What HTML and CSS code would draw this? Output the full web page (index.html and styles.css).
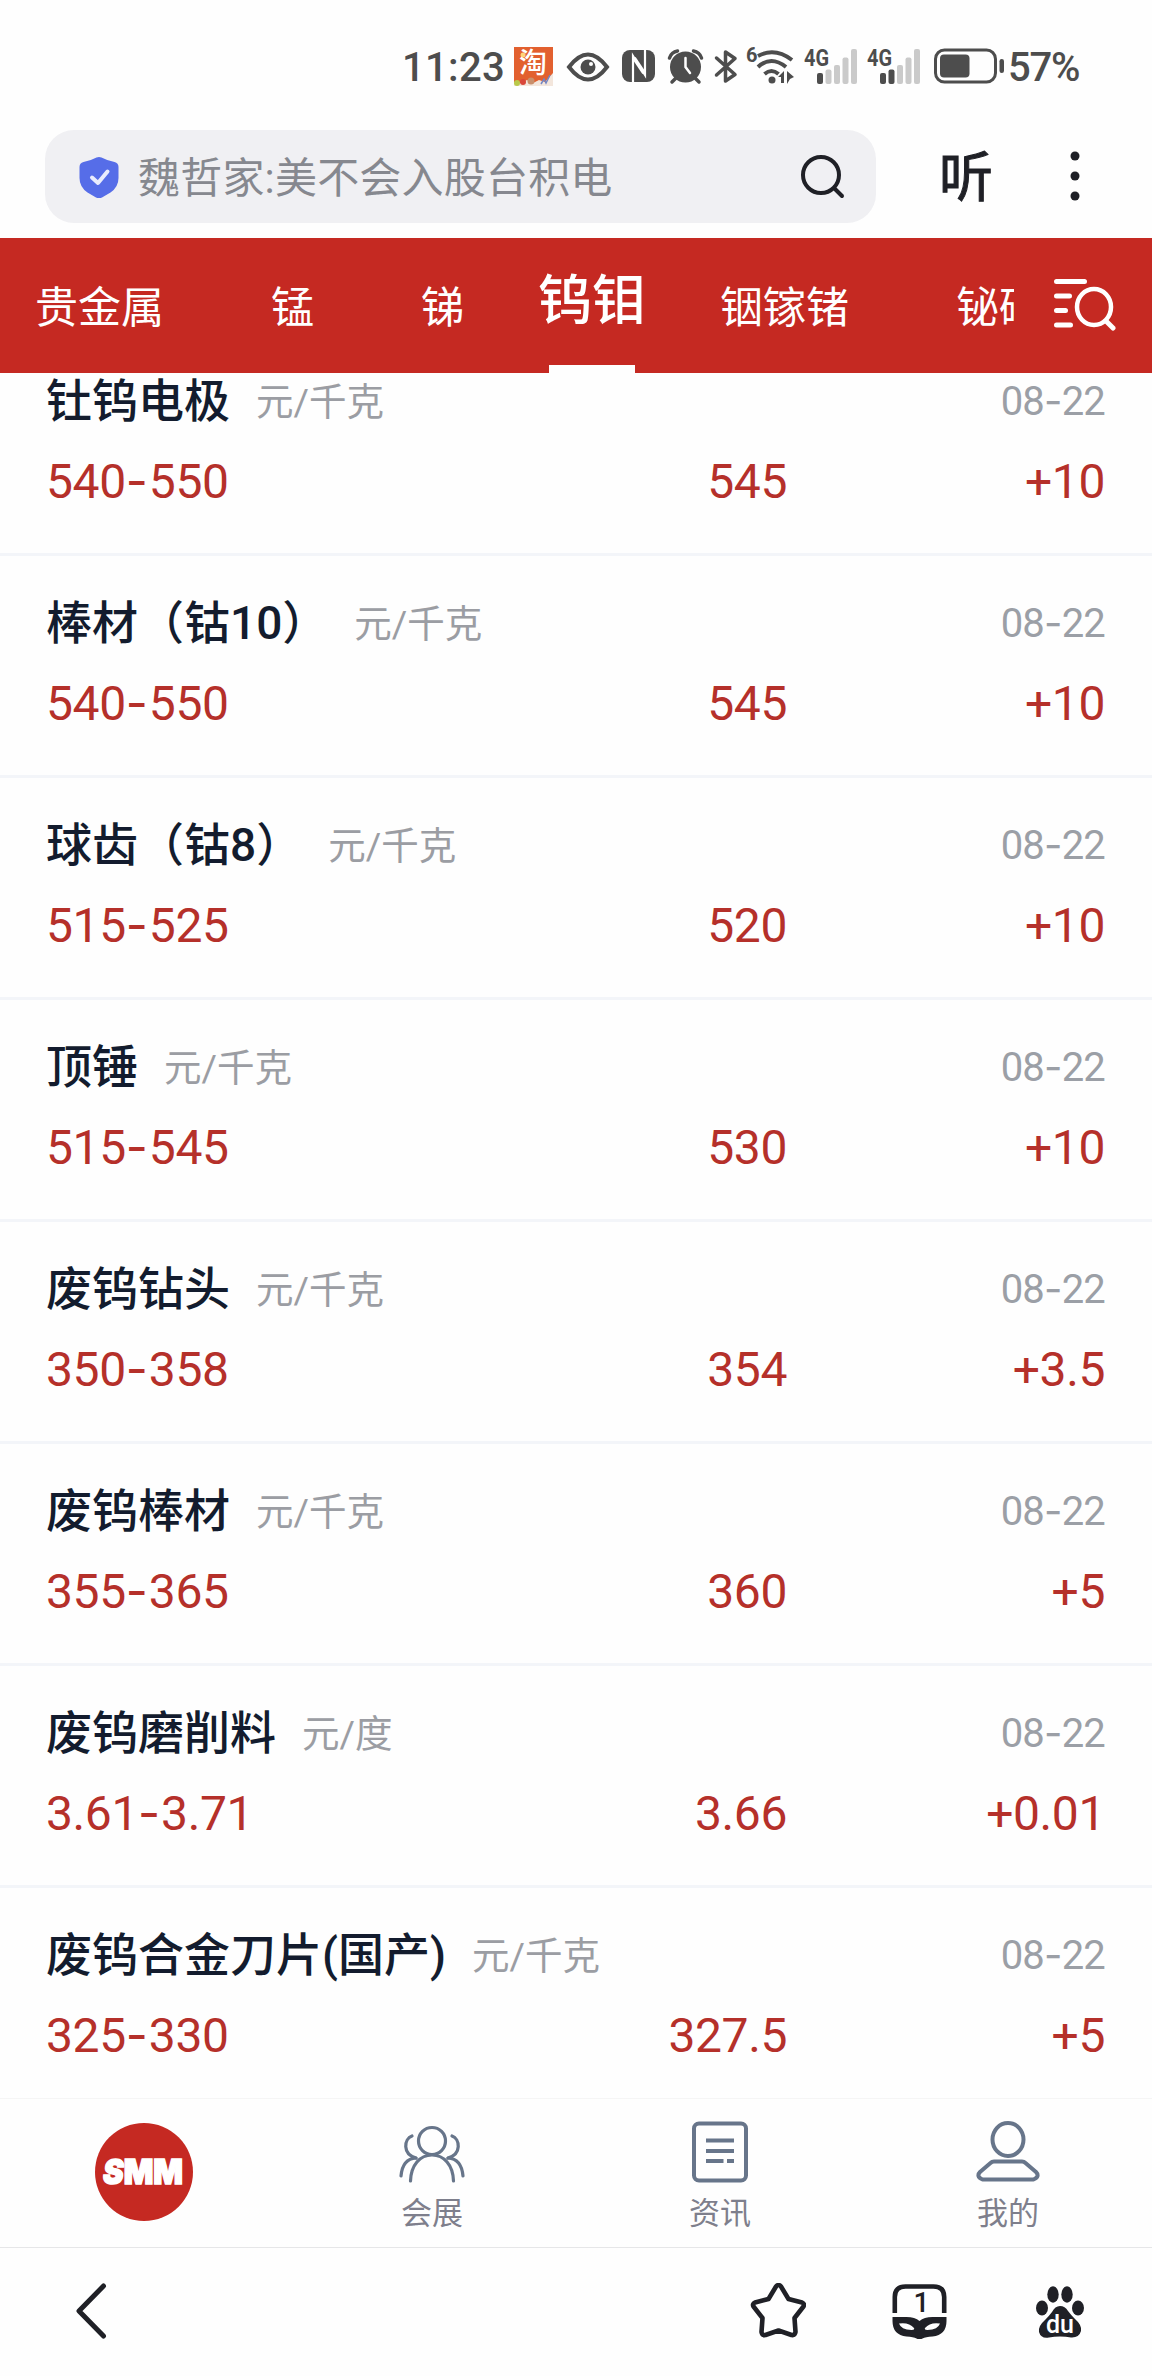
FILE: index.html
```html
<!DOCTYPE html>
<html lang="zh-CN">
<head>
  <meta charset="UTF-8">
  <meta name="viewport" content="width=device-width, initial-scale=1.0">
  <title>钨钼 - SMM</title>
  <link rel="stylesheet" href="styles.css">
</head>
<body>
  <!-- Status bar -->
  <div class="status">
    <span class="time">11:23</span>
    <svg class="status-icons" width="506" height="44" viewBox="510 44 506 44">
      <!-- taobao -->
      <rect x="514" y="47" width="39" height="39" fill="#e2602f"/>
      <circle cx="523" cy="55" r="2.5" fill="#ffd37a"/>
      <path d="M514 82l7 1 6-3 6 3 6-3 6 2 8-9v13h-39z" fill="#f3e6dc"/>
      <circle cx="517" cy="83" r="3" fill="#b9c94a"/>
      <circle cx="523" cy="82" r="3" fill="#d9473a"/>
      <circle cx="531" cy="81" r="3.5" fill="#c98f6b"/>
      <path d="M541 84l3-5 2 4 4-8" stroke="#7486c4" stroke-width="1.5" fill="none"/>
      <text x="519" y="73" class="tao">淘</text>
      <!-- eye -->
      <path d="M569 67q19-25 38 0q-19 25-38 0z" fill="none" stroke="#4d4d4d" stroke-width="4"/>
      <circle cx="588" cy="67" r="7.5" fill="#4d4d4d"/>
      <circle cx="591" cy="64" r="2" fill="#fff"/>
      <!-- nfc -->
      <rect x="622" y="50" width="33" height="32" rx="8" fill="#4d4d4d"/>
      <path d="M633 82V56L645 75V50" fill="none" stroke="#fff" stroke-width="2.200"/>
      <path d="M634 58L644 73" stroke="#fff" stroke-width="4"/>
      <!-- alarm -->
      <circle cx="685.500" cy="67" r="15.500" fill="#4d4d4d"/>
      <path d="M669.500 58q2-6 8-7M701.500 58q-2-6-8-7M676 78l-4 4M695 78l4 4" fill="none" stroke="#4d4d4d" stroke-width="3.500" stroke-linecap="round"/>
      <path d="M685.500 58v9l4.500 6" fill="none" stroke="#fff" stroke-width="2.500" stroke-linecap="round"/>
      <!-- bluetooth -->
      <path d="M716.500 58L735 74.500L725.500 81V52L735 58.500L716.500 75" fill="none" stroke="#4d4d4d" stroke-width="3.500" stroke-linejoin="round" stroke-linecap="round"/>
      <!-- wifi -->
      <text x="746" y="62" class="small-label">6</text>
      <g fill="none" stroke="#4d4d4d" stroke-width="4">
        <path d="M758 56q17-9 34 4"/>
        <path d="M758 67q13-12 28 0"/>
        <path d="M764.500 74q7-6 14 0"/>
      </g>
      <circle cx="772" cy="80" r="3.500" fill="#4d4d4d"/>
      <path d="M778 77l6-6v12h-3v-6zM787 71l7 6-4 2-3 5z" fill="#4d4d4d"/>
      <!-- signal 1 -->
      <text x="804" y="66" class="net-label" textLength="25" lengthAdjust="spacingAndGlyphs">4G</text>
      <g fill="#cacaca">
        <rect x="817" y="73" width="6" height="11" rx="2" fill="#4d4d4d"/>
        <rect x="825.500" y="69.500" width="6" height="14.500" rx="2"/>
        <rect x="834" y="65" width="6" height="19" rx="2"/>
        <rect x="842.500" y="57.500" width="6" height="26.500" rx="2"/>
        <rect x="851" y="49" width="6" height="35" rx="2"/>
      </g>
      <!-- signal 2 -->
      <text x="867" y="66" class="net-label" textLength="25" lengthAdjust="spacingAndGlyphs">4G</text>
      <g fill="#cacaca">
        <rect x="880" y="73" width="6" height="11" rx="2" fill="#4d4d4d"/>
        <rect x="888.500" y="69.500" width="6" height="14.500" rx="2" fill="#4d4d4d"/>
        <rect x="897" y="65" width="6" height="19" rx="2"/>
        <rect x="905.500" y="57.500" width="6" height="26.500" rx="2"/>
        <rect x="914" y="49" width="6" height="35" rx="2"/>
      </g>
      <!-- battery -->
      <rect x="935.500" y="50" width="60" height="32" rx="9" fill="none" stroke="#4d4d4d" stroke-width="3"/>
      <rect x="940" y="54.500" width="29.500" height="23" rx="4" fill="#4d4d4d"/>
      <rect x="999.500" y="59" width="4.500" height="14" rx="2.200" fill="#4d4d4d"/>
    </svg>
    <span class="battery">57%</span>
  </div>

  <!-- Browser search bar -->
  <div class="topbar">
    <div class="search">
      <svg width="40" height="42" viewBox="0 0 40 42">
        <path d="M17.500 1.500q2.500-1.200 5 0Q28 4.500 35.500 6q4 1 4 5v11q0 9-8 14.500l-8.500 5q-3 1.500-6 0l-8.500-5Q.5 31 .5 22V11q0-4 4-5Q12 4.500 17.500 1.500z" fill="#566de8"/>
        <path d="M13 21.500l6 5.500 9.500-11.500" fill="none" stroke="#e9ecfd" stroke-width="4" stroke-linecap="round" stroke-linejoin="round"/>
      </svg>
      <span class="query">魏哲家:美不会入股台积电</span>
      <svg width="46" height="46" viewBox="0 0 46 46" fill="none" stroke="#1f2026" stroke-width="4" stroke-linecap="round">
        <circle cx="22" cy="21" r="18"/>
        <path d="M36 35l7 7"/>
      </svg>
    </div>
    <span class="listen">听</span>
    <svg class="more" width="10" height="50" viewBox="0 0 10 50" fill="#1f2026">
      <circle cx="5" cy="5" r="4.500"/>
      <circle cx="5" cy="25" r="4.500"/>
      <circle cx="5" cy="45" r="4.500"/>
    </svg>
  </div>

  <!-- Metal tabs -->
  <div class="tabs">
    <div class="tab-list">
      <span class="tab">贵金属</span>
      <span class="tab">锰</span>
      <span class="tab">锑</span>
      <span class="tab active">钨钼</span>
      <span class="tab">铟镓锗</span>
      <span class="tab">铋硒碲</span>
    </div>
    <svg class="filter" width="64" height="54" viewBox="0 0 64 54" fill="none" stroke="#fff" stroke-width="5" stroke-linecap="round">
      <path d="M3.500 4.500h28M3.500 19h13M3.500 33.500h9M3.500 48h14"/>
      <ellipse cx="41" cy="30" rx="17" ry="18" stroke-width="4.500"/>
      <path d="M53 44l7 7"/>
    </svg>
  </div>

  <!-- Price list -->
  <div class="list">
    <div class="row">
      <div class="head"><span class="name">钍钨电极</span><span class="unit">元/千克</span><span class="date">08<i>-</i>22</span></div>
      <div class="values"><span>540<i>-</i>550</span><span>545</span><span>+10</span></div>
    </div>
    <div class="row">
      <div class="head"><span class="name">棒材（钴10）</span><span class="unit">元/千克</span><span class="date">08<i>-</i>22</span></div>
      <div class="values"><span>540<i>-</i>550</span><span>545</span><span>+10</span></div>
    </div>
    <div class="row">
      <div class="head"><span class="name">球齿（钴8）</span><span class="unit">元/千克</span><span class="date">08<i>-</i>22</span></div>
      <div class="values"><span>515<i>-</i>525</span><span>520</span><span>+10</span></div>
    </div>
    <div class="row">
      <div class="head"><span class="name">顶锤</span><span class="unit">元/千克</span><span class="date">08<i>-</i>22</span></div>
      <div class="values"><span>515<i>-</i>545</span><span>530</span><span>+10</span></div>
    </div>
    <div class="row">
      <div class="head"><span class="name">废钨钻头</span><span class="unit">元/千克</span><span class="date">08<i>-</i>22</span></div>
      <div class="values"><span>350<i>-</i>358</span><span>354</span><span>+3.5</span></div>
    </div>
    <div class="row">
      <div class="head"><span class="name">废钨棒材</span><span class="unit">元/千克</span><span class="date">08<i>-</i>22</span></div>
      <div class="values"><span>355<i>-</i>365</span><span>360</span><span>+5</span></div>
    </div>
    <div class="row">
      <div class="head"><span class="name">废钨磨削料</span><span class="unit">元/度</span><span class="date">08<i>-</i>22</span></div>
      <div class="values"><span>3.61<i>-</i>3.71</span><span>3.66</span><span>+0.01</span></div>
    </div>
    <div class="row">
      <div class="head"><span class="name">废钨合金刀片(国产)</span><span class="unit">元/千克</span><span class="date">08<i>-</i>22</span></div>
      <div class="values"><span>325<i>-</i>330</span><span>327.5</span><span>+5</span></div>
    </div>
  </div>

  <!-- App menu -->
  <div class="menu">
    <div class="menu-item">
      <svg width="98" height="98" viewBox="0 0 98 98">
        <circle cx="49" cy="49" r="49" fill="#c52922"/>
        <text x="8" y="61" class="smm" textLength="80" lengthAdjust="spacingAndGlyphs"><tspan class="lean">S</tspan>MM</text>
      </svg>
    </div>
    <div class="menu-item">
      <svg width="68" height="64" viewBox="0 0 68 64" fill="none" stroke="#67758a" stroke-width="3.200" stroke-linecap="round">
        <circle cx="34" cy="21" r="13.500"/>
        <path d="M12.500 61C13 45 22 35 34 35S55 45 55.500 61"/>
        <path d="M14 16C6 19 4 34 18 38M54 16C62 19 64 34 50 38"/>
        <path d="M3 56C4 45 9 38.500 18 38M65 56C64 45 59 38.500 50 38"/>
      </svg>
      <span>会展</span>
    </div>
    <div class="menu-item">
      <svg width="68" height="64" viewBox="0 0 68 64" fill="none" stroke="#67758a" stroke-width="4">
        <rect x="8" y="3.500" width="52" height="57" rx="5"/>
        <path d="M20 20.500h28M20 31h28M20 41h17.500M41 41h7"/>
      </svg>
      <span>资讯</span>
    </div>
    <div class="menu-item">
      <svg width="68" height="64" viewBox="0 0 68 64" fill="none" stroke="#67758a" stroke-width="4" stroke-linejoin="round">
        <ellipse cx="34" cy="19.500" rx="15.500" ry="16.500"/>
        <path d="M20 41.500h28q2 0 3.500 1.500l10.500 9q2 2 1.500 4t-4 3.500H8.500q-3.500-1.500-4-3.500t1.500-4l10.500-9q1.500-1.500 3.500-1.500z"/>
      </svg>
      <span>我的</span>
    </div>
  </div>

  <!-- Browser toolbar -->
  <div class="toolbar">
    <svg width="32" height="56" viewBox="0 0 32 56" fill="none" stroke="#1f2026" stroke-width="5" stroke-linecap="round" stroke-linejoin="round">
      <path d="M28.500 3L4 28l24.500 25"/>
    </svg>
    <div class="tools">
      <svg width="56" height="56" viewBox="0 0 56 56" fill="none" stroke="#1f2026" stroke-width="4.600" stroke-linejoin="round">
        <path d="M26 3.500q2.500-3 5 0l7.500 12.500 13.500 3.500q3 1.500 1.500 4l-9 11.500 1 14q-.5 3.500-4 3L28.500 47.500l-13 4.500q-3.500.5-4-3l1-14L3.500 23.500q-1.500-2.500 1.500-4L18.500 16z"/>
      </svg>
      <svg width="56" height="56" viewBox="0 0 56 56">
        <path d="M3.800 30V14Q3.800 3.500 14.500 3.500h28q10.700 0 10.700 10.500v16" fill="none" stroke="#1f2026" stroke-width="4.600"/>
        <path d="M1.500 34h14q8.500 0 13 4 4.500-4 13-4h14v4q0 14-14 15.500-7 .5-10 2l-3 1.500-3-1.500q-3-1.500-10-2Q1.500 52 1.500 38zM8 40.500q2 6 12.500 6.500 3.500 0 2.500-2-5-6-15-4.500zM49 40.500q-2 6-12.500 6.500-3.500 0-2.500-2 5-6 15-4.500z" fill="#1f2026" fill-rule="evenodd"/>
        <text x="22.500" y="29" class="count">1</text>
      </svg>
      <svg width="56" height="56" viewBox="0 0 56 56" fill="#1f2026">
        <ellipse cx="21" cy="11.500" rx="5.700" ry="8.200"/>
        <ellipse cx="35" cy="11.500" rx="5.700" ry="8.200"/>
        <ellipse cx="10" cy="25" rx="6" ry="7.400"/>
        <ellipse cx="46" cy="25" rx="6" ry="7.400"/>
        <path d="M28 23q5 0 8 5 3 4 7 8 7 6 6 12-2 7-10 6.500-5-1-11-1t-11 1Q9 56 7 49q-1-6 6-12 4-4 7-8 3-6 8-6z"/>
        <text x="28" y="50" class="du" textLength="28" lengthAdjust="spacingAndGlyphs">du</text>
      </svg>
    </div>
  </div>
</body>
</html>
```
FILE: styles.css
```css
* {
  box-sizing: border-box;
}
body {
  margin: 0;
  width: 1152px;
  height: 2376px;
  overflow: hidden;
  display: flex;
  flex-direction: column;
  background: #fefefe;
  font-family: Roboto, "Noto Sans CJK SC", sans-serif;
  color: #131c2e;
}
svg {
  display: block;
  flex: none;
}

/* Status bar */
.status {
  height: 130px;
  flex: none;
  display: flex;
  align-items: flex-start;
  padding: 44px 0 0 402px;
  color: #4d4d4d;
  font-size: 40px;
  font-weight: 500;
  line-height: 48px;
  white-space: nowrap;
}
.time {
  width: 108px;
  letter-spacing: 0.3px;
}
.status-icons {
  margin-right: -8px;
}
.tao {
  font-size: 28px;
  font-weight: 500;
  fill: #fff;
}
.small-label {
  font-size: 20px;
  font-weight: 700;
  fill: #4d4d4d;
}
.net-label {
  font-size: 23px;
  font-weight: 700;
  fill: #4d4d4d;
}
.battery {
  letter-spacing: -1.2px;
}

/* Search bar */
.topbar {
  height: 108px;
  flex: none;
  display: flex;
  align-items: flex-start;
  padding-left: 45px;
}
.search {
  width: 831px;
  height: 93px;
  display: flex;
  align-items: center;
  padding: 0 31px 0 34px;
  border-radius: 29px;
  background: #f0f0f3;
}
.query {
  flex: 1;
  margin-left: 19px;
  padding-top: 4px;
  font-size: 42px;
  line-height: 60px;
  letter-spacing: 0.2px;
  color: #86888f;
}
.listen {
  margin-left: 63px;
  width: 55px;
  font-size: 54px;
  line-height: 98px;
  color: #1f2026;
  -webkit-text-stroke: 1px #1f2026;
}
.more {
  margin: 21px 0 0 76px;
}

/* Red tabs */
.tabs {
  height: 135px;
  flex: none;
  display: flex;
  background: #c52922;
  color: #fff;
}
.tab-list {
  width: 1014px;
  overflow: hidden;
  display: flex;
  gap: 107px;
  padding-left: 35px;
  white-space: nowrap;
}
.tab {
  flex: none;
  font-size: 43px;
  line-height: 140px;
}
.tab.active {
  margin: 0 -33px;
  font-size: 54px;
  font-weight: 500;
  line-height: 127px;
  display: flex;
  flex-direction: column;
  align-items: center;
}
.tab.active::after {
  content: "";
  width: 86px;
  height: 8px;
  background: #fefefe;
}
.filter {
  margin: 39px 0 0 39px;
}

/* Price list */
.list {
  height: 1725px;
  flex: none;
  overflow: hidden;
}
.row {
  height: 222px;
  padding: 37px 47px 0 46px;
  border-bottom: 3px solid #f3f5f9;
}
.row:first-child {
  margin-top: -39px;
}
.row i {
  font-family: Inter, sans-serif;
  font-style: normal;
  line-height: 1;
}
.head {
  display: flex;
  align-items: center;
  height: 60px;
  white-space: nowrap;
}
.name {
  font-size: 46px;
  font-weight: 500;
  line-height: 60px;
}
.unit {
  margin-left: 26px;
  padding-top: 1px;
  font-size: 37.5px;
  line-height: 60px;
  color: #9b9da3;
}
.date {
  margin-left: auto;
  padding-top: 1px;
  font-size: 40px;
  line-height: 60px;
  letter-spacing: -0.8px;
  color: #9b9fa6;
}
.values {
  display: grid;
  grid-template-columns: 370px 371px 1fr;
  margin-top: 21px;
  font-size: 48px;
  line-height: 60px;
  letter-spacing: -0.4px;
  color: #b5302a;
}
.values i {
  letter-spacing: 1px;
}
.values span + span {
  text-align: right;
}

/* App menu */
.menu {
  height: 150px;
  flex: none;
  display: flex;
  border-top: 1px solid #f5f5f5;
  border-bottom: 1px solid #e6e6e8;
}
.menu-item {
  flex: 1;
  display: flex;
  flex-direction: column;
  align-items: center;
  padding-top: 21px;
  font-size: 31px;
  line-height: 60px;
  color: #7e7f8c;
}
.menu-item:first-child {
  padding-top: 24px;
}
.smm {
  font-family: Inter, sans-serif;
  font-size: 34px;
  font-weight: 900;
  fill: #fff;
  stroke: #fff;
  stroke-width: 1.5px;
}
.lean {
  font-style: italic;
}

/* Browser toolbar */
.toolbar {
  flex: 1;
  display: flex;
  justify-content: space-between;
  align-items: flex-start;
  padding: 35px 64px 0 75px;
}
.tools {
  display: flex;
  gap: 85px;
}
.count {
  font-size: 28px;
  font-weight: 500;
  fill: #1f2026;
}
.du {
  font-size: 25px;
  font-weight: 500;
  text-anchor: middle;
  fill: #fff;
}
```
